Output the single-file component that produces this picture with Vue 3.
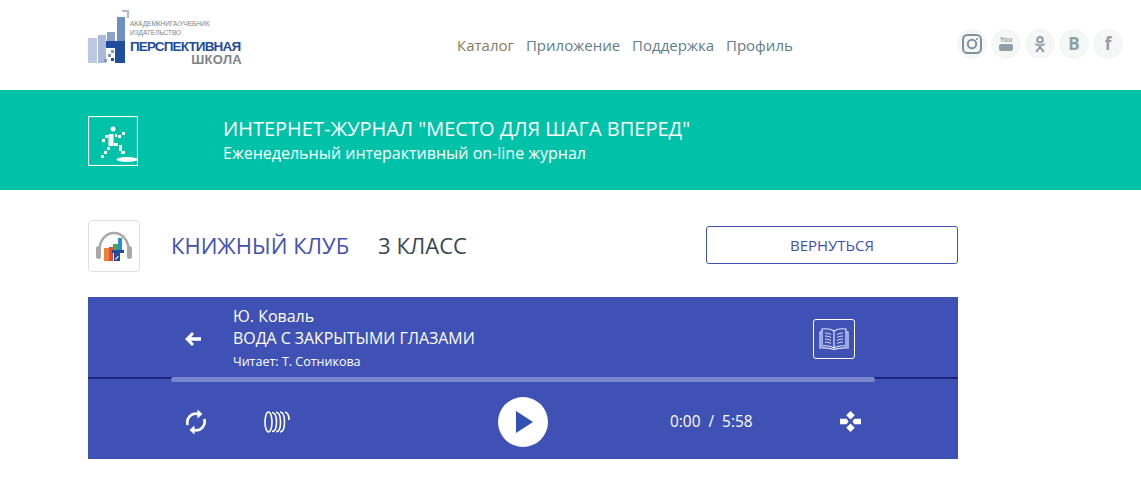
<template>
  <div class="page">
    <header class="top">
      <div class="logo">
        <svg class="logo-mark" width="44" height="56" viewBox="0 -2 44 56">
          <rect x="0" y="26" width="9" height="25" fill="#bcc9e2" />
          <rect x="10" y="23" width="8" height="28" fill="#a9bbd9" />
          <rect x="19" y="20" width="8" height="9" fill="#8aa3cc" />
          <rect x="29" y="5" width="8" height="24" fill="#6f8fc0" />
          <path d="M34 -2h7v8h-2V0h-5z" fill="#a9bbd9" />
          <path d="M18 29h19v22H27V36h-9z" fill="#1f4c9c" />
          <rect x="23" y="38" width="3" height="3" fill="#7d97c6" />
          <rect x="20" y="42" width="3" height="3" fill="#7d97c6" />
          <rect x="23" y="46" width="3" height="3" fill="#1f4c9c" />
          <rect x="16" y="47" width="3" height="3" fill="#7d97c6" />
        </svg>
        <div class="logo-text">
          <span class="logo-small">АКАДЕМКНИГА/УЧЕБНИК</span>
          <span class="logo-small">ИЗДАТЕЛЬСТВО</span>
          <span class="logo-main">ПЕРСПЕКТИВНАЯ</span>
          <span class="logo-sub">ШКОЛА</span>
        </div>
      </div>
      <nav class="menu">
        <a class="first">Каталог</a>
        <a>Приложение</a>
        <a>Поддержка</a>
        <a>Профиль</a>
      </nav>
      <div class="socials">
        <span class="soc">
          <svg width="20" height="20" viewBox="0 0 20 20" fill="none" stroke="#7f929c" stroke-width="2">
            <rect x="1" y="1" width="18" height="18" rx="4.5" />
            <circle cx="10" cy="10" r="4.2" />
            <circle cx="15" cy="5" r="0.6" fill="#7f929c" stroke-width="1" />
          </svg>
        </span>
        <span class="soc">
          <svg width="14" height="16" viewBox="0 0 14 16">
            <text x="7" y="6" text-anchor="middle" class="yt-you">You</text>
            <rect x="0" y="8" width="14" height="7" rx="2" fill="#8f9fa8" />
          </svg>
        </span>
        <span class="soc">
          <svg width="12" height="18" viewBox="0 0 14 20" fill="none" stroke="#8f9fa8" stroke-width="2.4" stroke-linecap="round">
            <circle cx="7" cy="5" r="3.2" />
            <path d="M2.500 10.500c3 1.600 6 1.600 9 0M7 12v1.500M3 18.500l4-5 4 5" />
          </svg>
        </span>
        <span class="soc letter">В</span>
        <span class="soc letter">f</span>
      </div>
    </header>

    <section class="band">
      <div class="band-icon">
        <svg width="50" height="50" viewBox="0 0 50 50">
          <rect x="0.500" y="0.500" width="49" height="49" fill="none" stroke="#fff" stroke-width="1.200" />
          <circle cx="25" cy="13" r="2.500" fill="#fff" />
          <rect x="20.500" y="18" width="5" height="12" fill="#fff" />
          <g fill="#fff">
            <rect x="17" y="19" width="3" height="3" />
            <rect x="14" y="23" width="3" height="3" />
            <rect x="27" y="18" width="2" height="3" />
            <rect x="30" y="19" width="3" height="3" />
            <rect x="34" y="16" width="3" height="3" />
            <rect x="19" y="31" width="3" height="3" />
            <rect x="16" y="35" width="3" height="3" />
            <rect x="13" y="39" width="3" height="3" />
            <rect x="26" y="27" width="4" height="3" />
            <rect x="31" y="29" width="3" height="6" />
            <rect x="33" y="35" width="4" height="3" />
          </g>
          <ellipse cx="39" cy="43.500" rx="10.500" ry="2.600" fill="#fff" />
        </svg>
      </div>
      <div class="band-text">
        <h1>ИНТЕРНЕТ-ЖУРНАЛ "МЕСТО ДЛЯ ШАГА ВПЕРЕД"</h1>
        <p>Еженедельный интерактивный on-line журнал</p>
      </div>
    </section>

    <main class="content">
      <div class="club">
        <div class="club-icon">
          <svg width="36" height="31" viewBox="0 0 36 31">
            <path d="M3.500 19C3.500 9 10 2 18 2s14.500 7 14.500 17" fill="none" stroke="#a9a9a9" stroke-width="2.600" />
            <rect x="0" y="15" width="5" height="13" rx="2.500" fill="#a9a9a9" />
            <rect x="31" y="15" width="5" height="13" rx="2.500" fill="#a9a9a9" />
            <rect x="8" y="17" width="5" height="13" fill="#f08036" />
            <rect x="13" y="16" width="4" height="14" fill="#e2483b" />
            <rect x="17" y="13" width="5" height="6" fill="#46a84d" />
            <rect x="22" y="7" width="4" height="13" fill="#2b8fd8" />
            <path d="M16 19h12v3h-4v8h-6v-8h-2z" fill="#1f4c9c" />
            <path d="M19 28l3-3 .8.800-3 3z" fill="#fff" />
          </svg>
        </div>
        <h2 class="club-title">КНИЖНЫЙ КЛУБ</h2>
        <span class="club-grade">3 КЛАСС</span>
        <button class="back">ВЕРНУТЬСЯ</button>
      </div>

      <div class="player">
        <div class="info">
          <svg class="arrow" width="16" height="14" viewBox="0 0 16 14" fill="#fff">
            <path d="M7 0l2 2-3 3.200h10v3.600H6L9 12l-2 2-7-7z" />
          </svg>
          <div class="meta">
            <div class="author">Ю. Коваль</div>
            <div class="title">ВОДА С ЗАКРЫТЫМИ ГЛАЗАМИ</div>
            <div class="reader">Читает: Т. Сотникова</div>
          </div>
          <button class="book">
            <svg width="30" height="24" viewBox="0 0 30 24" fill="none" stroke="#dfe3f5" stroke-width="1.200">
              <path d="M15 4C12 2 7 1.500 3 2v17c4-.5 9 0 12 2 3-2 8-2.500 12-2V2c-4-.5-9 0-12 2zM15 4v17" />
              <path d="M3 5H1v16c5-.5 10 0 14 1.500 4-1.500 9-2 14-1.500V5h-2" />
              <path d="M6 6c2 0 4 .5 6 1.500M6 9c2 0 4 .5 6 1.500M6 12c2 0 4 .5 6 1.500M6 15c2 0 4 .5 6 1.500M24 6c-2 0-4 .5-6 1.500M24 9c-2 0-4 .5-6 1.500M24 12c-2 0-4 .5-6 1.500M24 15c-2 0-4 .5-6 1.500" stroke-width="1" />
            </svg>
          </button>
        </div>

        <div class="seek"><div class="seek-bar"></div></div>

        <div class="controls">
          <svg class="loop" width="22" height="26" viewBox="0 0 22 26" fill="none" stroke="#fff" stroke-width="2.600">
            <path d="M2.800 16A8.500 8.500 0 0 1 13 5" />
            <path d="M19.200 10A8.500 8.500 0 0 1 9 21" />
            <path d="M12.500 .5l5 4.500-5 4.500z" fill="#fff" stroke="none" />
            <path d="M9.500 16.500l-5 4.500 5 4.500z" fill="#fff" stroke="none" />
          </svg>
          <svg class="rings" width="26" height="24" viewBox="0 0 26 24" fill="none" stroke="#fff" stroke-width="1.600">
            <ellipse cx="4.500" cy="12" rx="3.500" ry="10" />
            <path d="M8 2.500c3 0 4.500 4 4.500 9.500s-1.500 9.500-4.500 9.500" />
            <path d="M12 2.200c3 0 4.500 4 4.500 9.800s-1.500 9.800-4.500 9.800" />
            <path d="M16 2c3 0 4.500 4 4.500 10s-1.500 10-4.500 10" />
            <path d="M21 2c2.500 .5 4 4 4 8" />
          </svg>
          <button class="play">
            <svg width="17" height="22" viewBox="0 0 17 22"><path d="M0 0l17 11L0 22z" fill="#3152b5" /></svg>
          </button>
          <div class="time">0:00 &nbsp;/&nbsp; 5:58</div>
          <svg class="mode" width="21" height="21" viewBox="0 0 22 22" fill="#fff">
            <path d="M11 0l4.500 4.500L11 9 6.500 4.500zM11 13l4.500 4.500L11 22l-4.500-4.500zM0 8h7l2 3-2 3H0zM22 8h-7l-2 3 2 3h7z" />
          </svg>
        </div>
      </div>
    </main>
  </div>
</template>

<script setup>
</script>

<style>
html, body {
  margin: 0;
  background: #fff;
}
</style>

<style scoped>
.page {
  font-family: "Open Sans", "Noto Sans", sans-serif;
  width: 1141px;
  height: 494px;
  overflow: hidden;
}

.top {
  height: 90px;
  display: flex;
  align-items: center;
  padding-left: 88px;
  box-sizing: border-box;
}

.logo {
  width: 369px;
  display: flex;
  align-items: flex-start;
  height: 56px;
  margin-top: -14px;
}

.logo-mark {
  flex-shrink: 0;
}

.logo-text {
  display: flex;
  flex-direction: column;
  margin-left: -2px;
  padding-top: 9px;
  width: 112px;
}

.logo-small {
  font-family: "Liberation Sans", sans-serif;
  font-size: 6.5px;
  line-height: 9px;
  color: #7e8488;
  white-space: nowrap;
}

.logo-main {
  font-family: "Liberation Sans", sans-serif;
  font-size: 13.5px;
  font-weight: 700;
  line-height: 13px;
  margin-top: 3px;
  color: #1f4c9c;
  letter-spacing: -0.85px;
  white-space: nowrap;
}

.logo-sub {
  font-family: "Liberation Sans", sans-serif;
  font-size: 13px;
  font-weight: 700;
  line-height: 13px;
  color: #7e8488;
  text-align: right;
  letter-spacing: 0.3px;
}

.menu {
  display: flex;
  gap: 12px;
  font-size: 15px;
  color: #5f7d8b;
  width: 501px;
}

.menu .first {
  color: #8a7a5f;
}

.socials {
  display: flex;
  gap: 1px;
  margin-top: -3px;
  margin-left: -1px;
}

.soc {
  width: 30px;
  height: 30px;
  margin-right: 3px;
  border-radius: 50%;
  background: #f5f6f6;
  display: flex;
  align-items: center;
  justify-content: center;
}

.soc.letter {
  font-family: "Open Sans", sans-serif;
  font-weight: 700;
  font-size: 17px;
  color: #8f9fa8;
}

.yt-you {
  font-family: "Liberation Sans", sans-serif;
  font-size: 7px;
  font-weight: 700;
  fill: #8f9fa8;
}

.band {
  height: 100px;
  background: #00c2a8;
  display: flex;
  align-items: center;
  padding-left: 88px;
  color: #fff;
}

.band-icon {
  width: 135px;
  height: 50px;
  margin-top: 2px;
}

.band-text {
  margin-top: -2px;
}

.band-text h1 {
  margin: 0 0 2px;
  font-size: 20px;
  font-weight: 400;
  line-height: 25px;
}

.band-text p {
  margin: 0;
  font-size: 16px;
  font-weight: 400;
  line-height: 20px;
}

.content {
  width: 870px;
  margin-left: 88px;
}

.club {
  height: 107px;
  display: flex;
  align-items: center;
  box-sizing: border-box;
  padding-top: 30px;
  padding-bottom: 25px;
}

.club-icon {
  width: 52px;
  height: 52px;
  box-sizing: border-box;
  border: 1px solid #dde1e4;
  border-radius: 4px;
  display: flex;
  align-items: center;
  justify-content: center;
}

.club-title {
  margin: -2px 0 0 31px;
  font-size: 22px;
  font-weight: 400;
  color: #3f51b5;
}

.club-grade {
  margin-top: -2px;
  margin-left: 29px;
  font-size: 22px;
  font-weight: 400;
  color: #37474f;
}

.back {
  margin-left: auto;
  margin-top: -2px;
  width: 252px;
  height: 38px;
  background: #fff;
  border: 1px solid #3f51b5;
  border-radius: 3px;
  color: #3f51b5;
  font-family: inherit;
  font-size: 15px;
  font-weight: 400;
}

.player {
  background: #3f51b5;
  height: 162px;
  color: #fff;
}

.info {
  height: 80px;
  display: flex;
  align-items: center;
  box-sizing: border-box;
  padding-left: 97px;
}

.arrow {
  flex-shrink: 0;
  margin-top: 4px;
}

.meta {
  margin-left: 32px;
  width: 580px;
  margin-top: 3px;
}

.author {
  font-size: 16px;
  line-height: 22px;
}

.title {
  font-size: 15.9px;
  line-height: 22px;
}

.reader {
  font-size: 12.5px;
  line-height: 22px;
  margin-top: 2px;
}

.book {
  width: 42px;
  height: 40px;
  background: none;
  border: 1px solid #fff;
  border-radius: 3px;
  padding: 0;
  display: flex;
  align-items: center;
  justify-content: center;
  margin-top: 4px;
}

.seek {
  height: 5px;
  padding: 0 83px;
  background: linear-gradient(#1a237e, #1a237e) 0 0 / 100% 2px no-repeat;
}

.seek-bar {
  height: 5px;
  border-radius: 3px;
  background: #7986cb;
}

.controls {
  height: 77px;
  display: flex;
  align-items: center;
  padding-left: 97px;
  padding-top: 2px;
  box-sizing: border-box;
}

.rings {
  margin-left: 57px;
}

.play {
  width: 50px;
  height: 50px;
  border: none;
  border-radius: 50%;
  background: #fff;
  margin-left: 208px;
  padding: 0 0 0 3px;
  display: flex;
  align-items: center;
  justify-content: center;
}

.time {
  margin-left: 122px;
  font-size: 15.4px;
  width: 87px;
  white-space: nowrap;
}

.mode {
  margin-left: 83px;
}
</style>
